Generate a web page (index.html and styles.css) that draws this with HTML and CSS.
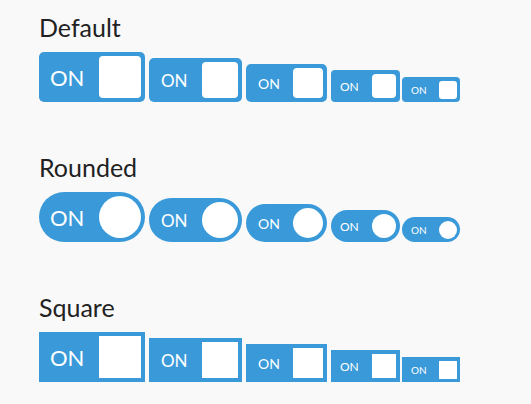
FILE: index.html
```html
<!DOCTYPE html>
<html lang="en">
<head>
<meta charset="utf-8">
<title>Switches</title>
<link rel="stylesheet" href="styles.css">
</head>
<body>
  <section class="group">
    <h2 class="group-title">Default</h2>
    <div class="switch-row">
      <span class="switch sw-xl"><span class="switch-label">ON</span><span class="knob"></span></span>
      <span class="switch sw-lg"><span class="switch-label">ON</span><span class="knob"></span></span>
      <span class="switch sw-md"><span class="switch-label">ON</span><span class="knob"></span></span>
      <span class="switch sw-sm"><span class="switch-label">ON</span><span class="knob"></span></span>
      <span class="switch sw-xs"><span class="switch-label">ON</span><span class="knob"></span></span>
    </div>
  </section>
  <section class="group">
    <h2 class="group-title">Rounded</h2>
    <div class="switch-row">
      <span class="switch switch-round sw-xl"><span class="switch-label">ON</span><span class="knob"></span></span>
      <span class="switch switch-round sw-lg"><span class="switch-label">ON</span><span class="knob"></span></span>
      <span class="switch switch-round sw-md"><span class="switch-label">ON</span><span class="knob"></span></span>
      <span class="switch switch-round sw-sm"><span class="switch-label">ON</span><span class="knob"></span></span>
      <span class="switch switch-round sw-xs"><span class="switch-label">ON</span><span class="knob"></span></span>
    </div>
  </section>
  <section class="group">
    <h2 class="group-title">Square</h2>
    <div class="switch-row">
      <span class="switch switch-square sw-xl"><span class="switch-label">ON</span><span class="knob"></span></span>
      <span class="switch switch-square sw-lg"><span class="switch-label">ON</span><span class="knob"></span></span>
      <span class="switch switch-square sw-md"><span class="switch-label">ON</span><span class="knob"></span></span>
      <span class="switch switch-square sw-sm"><span class="switch-label">ON</span><span class="knob"></span></span>
      <span class="switch switch-square sw-xs"><span class="switch-label">ON</span><span class="knob"></span></span>
    </div>
  </section>
</body>
</html>
```
FILE: styles.css
```css
html, body {
  margin: 0;
  background: #f9f9f9;
}

body {
  padding: 12px 0 0 39px;
  font-family: Lato, "Open Sans", sans-serif;
  color: #222;
  display: flex;
  flex-direction: column;
  gap: 50px;
}

.group-title {
  margin: 0 0 10px;
  font-size: 25px;
  line-height: 30px;
  font-weight: 400;
}

.switch-row {
  display: flex;
  align-items: flex-end;
  gap: 4px;
}

.switch {
  display: flex;
  align-items: center;
  justify-content: space-between;
  box-sizing: border-box;
  background: #3a9ad9;
  color: #fff;
  border-radius: 5px;
}

.knob {
  background: #fff;
  border-radius: 4px;
}

/* size scale */
.sw-xl { width: 106px; height: 50px; padding: 0 4px 0 11px; font-size: 22px; }
.sw-xl .knob { width: 42px; height: 42px; }

.sw-lg { width: 93px; height: 44px; padding: 0 4px 0 12px; font-size: 17px; }
.sw-lg .knob { width: 36px; height: 36px; }

.sw-md { width: 81px; height: 38px; padding: 0 4px 0 12px; font-size: 14px; }
.sw-md .knob { width: 30px; height: 30px; }

.sw-sm { width: 69px; height: 32px; padding: 0 4px 0 9px; font-size: 12px; border-radius: 4px; }
.sw-sm .knob { width: 24px; height: 24px; }

.sw-xs { width: 58px; height: 25px; padding: 0 3px 0 9px; font-size: 10px; border-radius: 4px; margin-left: -2px; }
.sw-xs .knob { width: 18px; height: 18px; border-radius: 3px; }

/* shape variants */
.switch-round.switch,
.switch-round .knob { border-radius: 999px; }

.switch-square.switch,
.switch-square .knob { border-radius: 0; }
```
